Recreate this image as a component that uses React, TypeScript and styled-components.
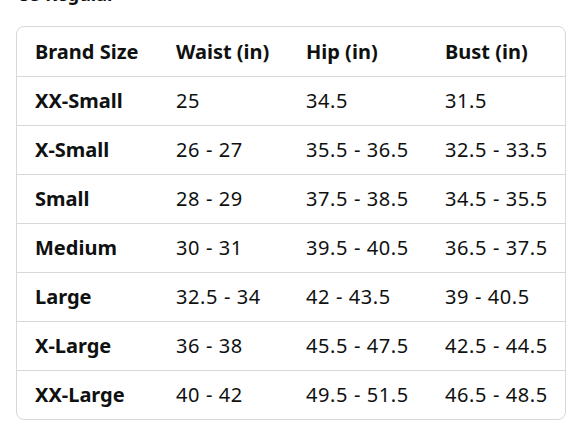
import styled, { createGlobalStyle } from "styled-components";

const GlobalStyle = createGlobalStyle`
    body {
        margin: 0;
        background: #ffffff;
        font-family: "Noto Sans", "Liberation Sans", sans-serif;
        color: #0f1111;
    }
`;

const Wrapper = styled.div`
    padding: 0 10px 0 16px;
    margin-top: -14px;
`;
const Heading = styled.h3`
    margin: 0 0 23px 1px;
    font-size: 18px;
    line-height: 17px;
    font-weight: 700;
`;
const Frame = styled.div`
    width: 548px;
    border: 1px solid #d5d9d9;
    border-radius: 8px;
    overflow: hidden;
`;
const Table = styled.table`
    width: 100%;
    border-collapse: collapse;
    table-layout: fixed;
`;
const Row = styled.tr`
    height: 49px;
    & + & {
        border-top: 1px solid #d5d9d9;
    }
`;
const Cell = styled.td<{ $bold?: boolean }>`
    padding: 0 0 0 18px;
    font-size: 20px;
    font-weight: ${(props) => (props.$bold ? 700 : 400)};
    letter-spacing: ${(props) => (props.$bold ? "0" : "0.6px")};
    white-space: nowrap;
    vertical-align: middle;
`;

const header = ["Brand Size", "Waist (in)", "Hip (in)", "Bust (in)"];
const rows = [
    ["XX-Small", "25", "34.5", "31.5"],
    ["X-Small", "26 - 27", "35.5 - 36.5", "32.5 - 33.5"],
    ["Small", "28 - 29", "37.5 - 38.5", "34.5 - 35.5"],
    ["Medium", "30 - 31", "39.5 - 40.5", "36.5 - 37.5"],
    ["Large", "32.5 - 34", "42 - 43.5", "39 - 40.5"],
    ["X-Large", "36 - 38", "45.5 - 47.5", "42.5 - 44.5"],
    ["XX-Large", "40 - 42", "49.5 - 51.5", "46.5 - 48.5"],
];

function App() {
    return (
        <Wrapper>
            <GlobalStyle />
            <Heading>US Regular</Heading>
            <Frame>
                <Table>
                    <colgroup>
                        <col style={{ width: 141 }} />
                        <col style={{ width: 130 }} />
                        <col style={{ width: 139 }} />
                        <col />
                    </colgroup>
                    <tbody>
                        <Row>
                            {header.map((h) => (
                                <Cell key={h} $bold>
                                    {h}
                                </Cell>
                            ))}
                        </Row>
                        {rows.map((r) => (
                            <Row key={r[0]}>
                                {r.map((v, i) => (
                                    <Cell key={i} $bold={i === 0}>
                                        {v}
                                    </Cell>
                                ))}
                            </Row>
                        ))}
                    </tbody>
                </Table>
            </Frame>
        </Wrapper>
    );
}
export default App;
